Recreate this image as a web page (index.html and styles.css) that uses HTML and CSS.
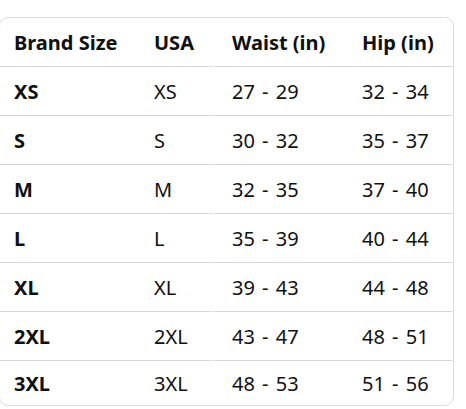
FILE: index.html
```html
<!DOCTYPE html>
<html lang="en">
<head>
<meta charset="utf-8">
<title>Size chart</title>
<link rel="stylesheet" href="styles.css">
</head>
<body>
<div class="card">
  <div class="row head">
    <div class="c c1">Brand Size</div><div class="c c2">USA</div><div class="c c3">Waist (in)</div><div class="c c4">Hip (in)</div>
  </div>
  <div class="row">
    <div class="c c1 b">XS</div><div class="c c2">XS</div><div class="c c3">27 - 29</div><div class="c c4">32 - 34</div>
  </div>
  <div class="row">
    <div class="c c1 b">S</div><div class="c c2">S</div><div class="c c3">30 - 32</div><div class="c c4">35 - 37</div>
  </div>
  <div class="row">
    <div class="c c1 b">M</div><div class="c c2">M</div><div class="c c3">32 - 35</div><div class="c c4">37 - 40</div>
  </div>
  <div class="row">
    <div class="c c1 b">L</div><div class="c c2">L</div><div class="c c3">35 - 39</div><div class="c c4">40 - 44</div>
  </div>
  <div class="row">
    <div class="c c1 b">XL</div><div class="c c2">XL</div><div class="c c3">39 - 43</div><div class="c c4">44 - 48</div>
  </div>
  <div class="row">
    <div class="c c1 b">2XL</div><div class="c c2">2XL</div><div class="c c3">43 - 47</div><div class="c c4">48 - 51</div>
  </div>
  <div class="row last">
    <div class="c c1 b">3XL</div><div class="c c2">3XL</div><div class="c c3">48 - 53</div><div class="c c4">51 - 56</div>
  </div>
</div>
</body>
</html>
```

FILE: styles.css
```css
html, body {
  margin: 0;
  padding: 0;
  background: #ffffff;
}
body {
  font-family: "Noto Sans", "Open Sans", sans-serif;
  font-size: 20px;
  color: #0f1111;
  overflow: hidden;
}
.card {
  box-sizing: border-box;
  width: 455px;
  margin: 17px 0 0 -1px;
  border: 1px solid #dcdcdc;
  border-radius: 9px;
}
.row {
  display: grid;
  grid-template-columns: 140px 73px 135px 105px;
}
.c {
  box-sizing: border-box;
  height: 49px;
  border-bottom: 1px solid #d8d8d8;
  display: flex;
  align-items: center;
  padding-left: 14px;
  white-space: nowrap;
}
.c3 {
  margin-left: 1px;
  padding-left: 18px;
}
.row:not(.head) .c3,
.row:not(.head) .c4 {
  word-spacing: 2px;
}
.head .c {
  font-weight: 700;
}
.b {
  font-weight: 700;
}
.last .c {
  height: 44px;
  border-bottom: none;
}
```
